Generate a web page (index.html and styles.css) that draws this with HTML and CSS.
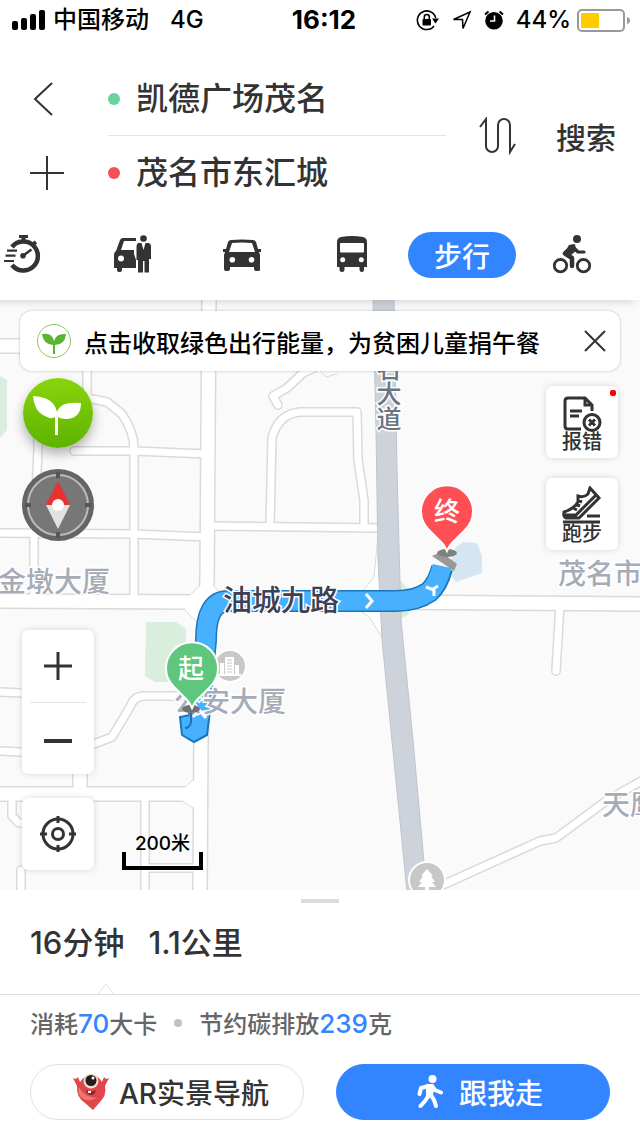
FILE: index.html
```html
<!DOCTYPE html>
<html lang="zh-CN">
<head>
    <meta charset="UTF-8">
    <meta name="viewport" content="width=device-width, initial-scale=1.0">
    <title>步行路线</title>
    <link rel="stylesheet" href="styles.css">
</head>
<body>
    <div class="status-bar">
        <div class="status-left">
            <svg width="34" height="20" viewBox="0 0 34 20">
                <rect x="0" y="11" width="6" height="9" rx="2"/>
                <rect x="9" y="8" width="6" height="12" rx="2"/>
                <rect x="18" y="4" width="6" height="16" rx="2"/>
                <rect x="27" y="0" width="6" height="20" rx="2"/>
            </svg>
            <span>中国移动</span>
            <span class="network">4G</span>
        </div>
        <div class="status-time">16:12</div>
        <div class="status-right">
            <svg width="24" height="22" viewBox="0 0 24 22">
                <path d="M18 17A9.300 9.300 0 1 1 19.700 9" fill="none" stroke="#000" stroke-width="1.600"/>
                <path d="M16 9.500h7l-3.500 5z"/>
                <rect x="6.500" y="10" width="8.500" height="6.500" rx="1"/>
                <path d="M8.300 10.500V8a2.500 2.500 0 0 1 5 0v2.500" fill="none" stroke="#000" stroke-width="1.600"/>
            </svg>
            <svg width="20" height="20" viewBox="0 0 20 20">
                <path d="M1.500 9.500L18 2L11 18.500L10.500 9.500Z" fill="none" stroke="#000" stroke-width="1.500"/>
            </svg>
            <svg width="20" height="20" viewBox="0 0 20 20">
                <circle cx="10" cy="10.700" r="8.800"/>
                <path d="M1 4.500L4.500 1.500M19 4.500L15.500 1.500" stroke="#000" stroke-width="2"/>
                <path d="M10.500 5.500V11H6" fill="none" stroke="#fff" stroke-width="1.600"/>
            </svg>
            <span>44%</span>
            <svg width="53" height="23" viewBox="0 0 53 23">
                <rect x="1" y="1" width="46" height="21" rx="4" fill="#fff" stroke="#999" stroke-width="2"/>
                <rect x="4" y="4" width="18" height="15" rx="1" fill="#fc0"/>
                <path d="M50 8q3 1 3 3.500t-3 3.500z" fill="#999"/>
            </svg>
        </div>
    </div>

    <header class="search">
        <div class="search-side">
            <button class="icon-btn" aria-label="返回">
                <svg width="36" height="36" viewBox="0 0 36 36"><path d="M23 2L6 18L23 34"/></svg>
            </button>
            <button class="icon-btn" aria-label="添加途经点">
                <svg width="36" height="36" viewBox="0 0 36 36"><path d="M1 18H35M18 1V35"/></svg>
            </button>
        </div>
        <div class="search-fields">
            <label class="field">
                <span class="dot dot-start"></span>
                <input type="text" value="凯德广场茂名" aria-label="起点">
            </label>
            <label class="field">
                <span class="dot dot-end"></span>
                <input type="text" value="茂名市东汇城" aria-label="终点">
            </label>
        </div>
        <button class="icon-btn" aria-label="交换起终点">
            <svg width="38" height="38" viewBox="0 0 38 38"><path d="M1 10L7 2V29a6 6 0 0 0 12 0V8a6 6 0 0 1 12 0V35L36 27"/></svg>
        </button>
        <button class="search-btn">搜索</button>
    </header>

    <nav class="modes">
        <button class="mode" aria-label="智行">
            <svg width="40" height="40" viewBox="0 0 40 40">
                <path d="M10 12A14.500 14.500 0 1 1 10 30" fill="none" stroke="#333" stroke-width="4.500"/>
                <path d="M17 0h9v3h-2.500v4h-4V3H17z"/>
                <path d="M30 10L34 7" stroke="#333" stroke-width="4"/>
                <path d="M5 15.700H15M3.500 20.700H13.500M2 26H12" stroke="#333" stroke-width="2.200"/>
                <path d="M21 20.700L29.500 14.500" stroke="#333" stroke-width="2.500"/>
                <circle cx="21" cy="20.700" r="2.800"/>
            </svg>
        </button>
        <button class="mode" aria-label="打车">
            <svg width="40" height="40" viewBox="0 0 40 40">
                <path d="M4 16L8 5Q9 3 11 3H24V6H12L9 15H22V19L24 25V33H10V35Q10 37 8 37Q5 37 5 35V33H2V20Q2 17 4 16Z"/>
                <circle cx="9" cy="23.500" r="3" fill="#fff"/>
                <circle cx="31.500" cy="3.500" r="3.300"/>
                <path d="M27 8H36Q39 8 39 12V24H37V37.500H32.500V26H31V37.500H26V25H24.500V12Q24.500 8 27 8Z"/>
                <path d="M29.500 8L31.500 15L33.500 8Z" fill="#fff"/>
            </svg>
        </button>
        <button class="mode" aria-label="驾车">
            <svg width="40" height="40" viewBox="0 0 40 40">
                <path fill-rule="evenodd" d="M9 5Q20 4 31 5Q33 5 34 7L36 14H39V17H37L38 20V35Q38 36 36 36H34Q32 36 32 34V32H8V34Q8 36 6 36H4Q2 36 2 34V20L3 17H1V14H4L6 7Q7 5 9 5ZM10 8L7 17H33L30 8Q20 7 10 8Z"/>
                <circle cx="10.300" cy="24.700" r="2.800" fill="#fff"/>
                <circle cx="29.500" cy="24.700" r="2.800" fill="#fff"/>
            </svg>
        </button>
        <button class="mode" aria-label="公交">
            <svg width="40" height="40" viewBox="0 0 40 40">
                <path d="M9 2Q20 0 31 2Q35 3 35 7V32H32V35Q32 37 30 37Q27.500 37 27.500 35V32H12.500V35Q12.500 37 10 37Q7.500 37 7.500 35V32H5V7Q5 3 9 2Z"/>
                <rect x="8" y="8" width="24" height="9.500" rx="1" fill="#fff"/>
                <circle cx="10.700" cy="24.700" r="2.500" fill="#fff"/>
                <circle cx="29.300" cy="24.700" r="2.500" fill="#fff"/>
            </svg>
        </button>
        <button class="mode mode-active">步行</button>
        <button class="mode" aria-label="骑行">
            <svg width="40" height="40" viewBox="0 0 40 40">
                <g fill="none" stroke="#333" stroke-linecap="round" stroke-linejoin="round">
                    <circle cx="8.500" cy="30.700" r="6.200" stroke-width="2.800"/>
                    <circle cx="31.500" cy="30.700" r="6.200" stroke-width="2.800"/>
                    <path d="M20 12L13 18.500L20 23V31" stroke-width="4.500"/>
                    <path d="M21 12L26 17H32" stroke-width="3.200"/>
                </g>
                <path d="M17 10L23 9L24 16L19 20L12 19Z"/>
                <circle cx="25" cy="4" r="4"/>
            </svg>
        </button>
    </nav>

    <main class="map">
        <svg class="map-canvas" viewBox="0 300 640 590" preserveAspectRatio="xMidYMid slice">
            <defs>
                <g id="lanes">
                    <path d="M87 346V398L107 402L122 414Q134 432 134 448V600"/>
                    <path d="M74 451H134L207 454"/>
                    <path d="M38 400V450L34 535V600"/>
                    <path d="M0 533L134 534L207 537"/>
                    <path d="M207 526L380 528"/>
                    <path d="M270 526L272 438Q278 414 300 412H357L358 460L364 500V528"/>
                    <path d="M278 405L273 396L287 388L303 373L314 368L320 356"/>
                    <path d="M560 604L556 671"/>
                    <path d="M425 893L540 841L556 838L606 801L645 779"/>
                    <path d="M0 692L22 693L60 706"/>
                    <path d="M0 751L40 753L94 744L112 737L130 707Q134 696 144 696H200"/>
                    <path d="M12 796V816L19 823H40"/>
                    <path d="M21 870V895"/>
                    <path d="M145 794V895"/>
                    <path d="M145 868H200"/>
                </g>
                <g id="streets">
                    <path d="M0 346H88"/>
                    <path d="M209 295L207 580L201 740L200 895"/>
                    <path d="M0 601L200 602H380L640 604"/>
                    <path d="M80 740V794"/>
                    <path d="M0 794H198"/>
                </g>
            </defs>

            <!-- parks and blocks -->
            <path class="park" d="M-5 376H0L7 380V430L0 438H-5ZM146 622H176L186 629V682H155L145 676Z"/>
            <path class="block" d="M455 548L463 542L477 543L482 556V573L456 582L447 570Z"/>

            <use href="#lanes" class="lane-edge"/>
            <use href="#streets" class="street-edge"/>
            <path class="corner" d="M378 535L374 577L362 592V612L370 618L381 636H390V535Z"/>
            <path class="corner" d="M190 595L199 586H214L222 596V608L212 622H197L184 609ZM184 788L193 780H207V808H193L182 801Z"/>
            <use href="#lanes" class="lane"/>
            <use href="#streets" class="street"/>
            <path class="park" d="M400 580L409 590V614L400 620Z"/>
            <path class="highway" d="M373 298H394L397 470L401 620L413 740L424 862L427 892H407L382 640L378 560L376 430Z"/>
            <path class="park-edge" d="M320 371L326 377L337 374"/>

            <!-- walking route -->
            <g class="route">
                <path class="route-edge" d="M199 715L206 640Q206 601 228 601H396Q416 601 429 592Q438 584 442 568"/>
                <path class="route-end" d="M180 717L182 735L194 742L207 735L210 711Z"/>
                <path class="route-fill" d="M199 718L206 640Q206 601 228 601H396Q416 601 429 592Q438 584 442 566"/>
                <path class="route-hook" d="M191 710V722Q190 728 185 728"/>
                <path class="route-arrow" d="M366 594L372 601L366 608M426 587L434 590V596M193 717L199 710L206 718M433 589L438 586"/>
            </g>

            <!-- road and place names -->
            <text class="road-name-side" x="387" y="356">名大道</text>
            <g class="place">
                <text x="-2" y="592">金墩大厦</text>
                <text x="558" y="584">茂名市</text>
                <text x="602" y="815">天鹰</text>
                <text x="174" y="712">公安大厦</text>
            </g>
            <text class="road-name" x="223" y="611">油城九路</text>

            <!-- points of interest -->
            <circle class="poi" cx="230" cy="666" r="16"/>
            <path fill="#fff" d="M225 657H234V674H225ZM220 663H224V674H220ZM235 665H239V674H235ZM218 674H241V676H218Z"/>
            <path stroke="#c8c8c8" stroke-width="1" d="M227 660H232M227 663H232M227 666H232M227 669H232M227 672H232"/>
            <circle class="poi" cx="427" cy="880" r="18"/>
            <path fill="#fff" d="M427 869L433 876H431L435 882H432L436 887H429V892H425V887H418L422 882H419L423 876H421Z"/>

            <!-- start and end pins -->
            <path d="M432 556L441 552L457 564L454 571Z" fill="#999"/>
            <ellipse cx="447" cy="553" rx="10" ry="4" fill="#808080"/>
            <ellipse cx="191" cy="709" rx="9" ry="4" fill="#707070"/>
            <path class="pin pin-end" d="M447 551Q444 544 438 539L429 530A26 26 0 1 1 465 530L456 539Q450 544 447 551Z"/>
            <path class="pin pin-start" d="M192 708Q189 701 183 696L174 687A26 26 0 1 1 210 687L201 696Q195 701 192 708Z"/>
            <text class="pin-text" x="447" y="521">终</text>
            <text class="pin-text" x="191" y="678">起</text>
        </svg>

        <div class="map-overlay">
            <div class="banner">
                <svg width="36" height="36" viewBox="0 0 36 36">
                    <circle cx="18" cy="18" r="16.500" fill="#fff" stroke="#8cc95c" stroke-width="1"/>
                    <path fill="#5cb531" d="M6 11Q16 9 18 18Q20 10 30 11Q29 22 19 22V31H17V22Q7 21 6 11Z"/>
                </svg>
                <span class="banner-text">点击收取绿色出行能量，为贫困儿童捐午餐</span>
                <button class="icon-btn" aria-label="关闭">
                    <svg width="22" height="22" viewBox="0 0 22 22"><path d="M1 1L21 21M21 1L1 21"/></svg>
                </button>
            </div>

            <div class="map-tools">
                <div class="tools-left">
                    <div class="tool-group">
                        <button class="energy" aria-label="绿色能量">
                            <svg width="70" height="70" viewBox="0 0 70 70">
                                <path fill="#fff" d="M10 18Q31 19 34 34Q37 23 58 25Q58 40 44 41Q38 41 35 39V57H32V39Q28 42 20 37Q11 32 10 18Z"/>
                            </svg>
                        </button>
                        <button class="compass" aria-label="指南针">
                            <svg width="72" height="72" viewBox="0 0 72 72">
                                <circle cx="36" cy="36" r="33" fill="#777" stroke="#656565" stroke-width="6"/>
                                <circle cx="36" cy="36" r="30" fill="none" stroke="#bbb" stroke-width="2"/>
                                <path d="M36 3V9M36 63V69M3 36H9M63 36H69" stroke="#555" stroke-width="4"/>
                                <path d="M36 12L48 36H24Z" fill="#e8322f"/>
                                <path d="M36 60L48 36H24Z" fill="#e2e2e2"/>
                                <circle cx="36" cy="36" r="6" fill="#fff"/>
                            </svg>
                        </button>
                    </div>
                    <div class="tool-group tool-group-bottom">
                        <div class="card zoom">
                            <button class="zoom-btn" aria-label="放大">
                                <svg width="28" height="28" viewBox="0 0 28 28"><path d="M0 14H28M14 0V28"/></svg>
                            </button>
                            <button class="zoom-btn" aria-label="缩小">
                                <svg width="28" height="28" viewBox="0 0 28 28"><path d="M0 16H28" stroke-width="4"/></svg>
                            </button>
                        </div>
                        <button class="card locate" aria-label="定位">
                            <svg width="36" height="36" viewBox="0 0 36 36">
                                <circle cx="18" cy="18" r="15"/>
                                <circle cx="18" cy="18" r="5.500"/>
                                <path d="M18 0V7M18 29V36M0 18H7M29 18H36"/>
                            </svg>
                        </button>
                    </div>
                </div>
                <div class="scale">
                    <span>200米</span>
                    <div class="scale-bar"></div>
                </div>
                <div class="tools-right">
                    <button class="card tool">
                        <svg width="40" height="36" viewBox="0 0 40 36">
                            <path d="M19 33H6Q3 33 3 30V5Q3 2 6 2H23L30 9V15M23 2V9H30M8 15H20M8 20H17"/>
                            <circle cx="30" cy="26.500" r="8"/>
                            <path d="M27 23.500L33 29.500M33 23.500L27 29.500"/>
                        </svg>
                        <span>报错</span>
                        <i class="badge"></i>
                    </button>
                    <button class="card tool">
                        <svg width="40" height="38" viewBox="0 0 40 38">
                            <path d="M28 2L37 12L17 32H4Q1 31 2 26Q12 23 16 16V10Q22 12 26 8ZM3 29H14L34 9M15 14L20 16M13 18L18 20M11 22L15 24M25 30H38M1 36H38"/>
                        </svg>
                        <span>跑步</span>
                    </button>
                </div>
            </div>
        </div>
    </main>

    <section class="panel">
        <div class="handle"></div>
        <div class="summary">
            <span>16分钟</span>
            <span>1.1公里</span>
        </div>
        <div class="details">
            <svg class="caret" width="16" height="12" viewBox="0 0 16 12"><path d="M0 11L8 1L16 11" fill="#fff" stroke="#ddd"/></svg>
            <span>消耗<b>70</b>大卡</span>
            <span class="sep"></span>
            <span>节约碳排放<b>239</b>克</span>
        </div>
        <div class="actions">
            <button class="btn">
                <svg width="36" height="38" viewBox="0 0 36 38">
                    <path fill="#e0474c" d="M0 5L3 6L5 4L7 9Q12 2 18 2Q25 2 29 9L31 4L33 6L36 5L32 13Q34 22 27 29L20 37L12 30Q3 24 4 13Z"/>
                    <path fill="#f07674" d="M6 14Q10 24 24 25Q14 30 8 24Q4 19 6 14Z"/>
                    <circle cx="18" cy="8" r="7.500" fill="#e9dfd0"/>
                    <circle cx="18" cy="7.500" r="5.500" fill="#241a1c"/>
                    <circle cx="20" cy="5" r="1.500" fill="#fff"/>
                    <path d="M13 17Q18 20 23 17Q22 22 18 22Q14 22 13 17Z" fill="#8b2328"/>
                    <path d="M15 18H18V20H15Z" fill="#fff"/>
                </svg>
                <span>AR实景导航</span>
            </button>
            <button class="btn btn-primary">
                <svg width="26" height="34" viewBox="0 0 26 34">
                    <circle cx="15.500" cy="4" r="4"/>
                    <path fill="none" stroke="#fff" stroke-linecap="round" stroke-linejoin="round" stroke-width="4" d="M12 11L4 13L2.500 19M15 11L18 15L24 17.500M12 20L8 26L3.500 31M14 20L17 25L19 31"/>
                    <path d="M9 9H16L18 13L15 22H9Z"/>
                </svg>
                <span>跟我走</span>
            </button>
        </div>
    </section>
</body>
</html>
```

FILE: styles.css
```css
* {
    box-sizing: border-box;
}
body {
    margin: 0;
    min-height: 100vh;
    display: flex;
    flex-direction: column;
    background: #fff;
    color: #333;
    font-family: Inter, "Noto Sans CJK SC", sans-serif;
    font-size: 24px;
    font-weight: 500;
}
button {
    padding: 0;
    border: none;
    background: none;
    color: inherit;
    font: inherit;
    cursor: pointer;
}
svg {
    display: block;
    flex: none;
}

/* status bar */
.status-bar {
    display: grid;
    grid-template-columns: 1fr auto 1fr;
    align-items: center;
    height: 40px;
    padding: 0 10px 0 12px;
    color: #000;
    line-height: 40px;
}
.status-left, .status-right {
    display: flex;
    align-items: center;
    gap: 7px;
}
.status-right {
    justify-content: flex-end;
    gap: 12px;
}
.status-right span {
    margin-right: -6px;
}
.network {
    margin-left: 14px;
}
.status-time {
    margin-left: 6px;
    font-size: 26px;
    font-weight: 700;
}

/* start / end search */
.search {
    display: flex;
    align-items: center;
    padding: 22px 24px 0 29px;
}
.search-side {
    width: 79px;
}
.icon-btn {
    display: flex;
    align-items: center;
}
.icon-btn svg {
    fill: none;
    stroke: #333;
    stroke-width: 2;
}
.search-side .icon-btn {
    height: 74px;
}
.search-fields {
    flex: 1;
    min-width: 0;
    margin-right: 33px;
}
.field {
    display: flex;
    align-items: center;
    height: 74px;
    gap: 16px;
}
.field:first-child {
    border-bottom: 1px solid #e4e4e4;
}
.field input {
    flex: 1;
    min-width: 0;
    padding: 0;
    border: none;
    outline: none;
    background: none;
    color: #333;
    font: inherit;
    font-size: 32px;
    line-height: 48px;
}
.dot {
    width: 12px;
    height: 12px;
    border-radius: 50%;
}
.dot-start {
    background: #67d49c;
}
.dot-end {
    background: #ef5250;
}
.search-btn {
    margin-left: 39px;
    font-size: 30px;
}

.modes {
    position: relative;
    z-index: 1;
    display: grid;
    grid-template-columns: repeat(6, 1fr);
    margin: 0 0 0 -33px;
    padding: 22px 13px 22px 0;
    background: #fff;
    box-shadow: 0 8px 8px -6px rgba(0, 0, 0, 0.15);
}
.mode {
    display: flex;
    align-items: center;
    justify-content: center;
    height: 46px;
    margin: 0 1px;
    border-radius: 23px;
    font-size: 28px;
}
.mode svg {
    fill: #333;
}
.mode-active {
    background: #3385ff;
    color: #fff;
}

/* map */
.map {
    position: relative;
    flex: 1;
    min-height: 590px;
    overflow: hidden;
    background: #fafafa;
}
.map-canvas {
    position: absolute;
    inset: 0;
    width: 100%;
    height: 100%;
}
.lane, .lane-edge, .street, .street-edge {
    fill: none;
    stroke: #fff;
    stroke-width: 7px;
    stroke-linecap: round;
    stroke-linejoin: round;
}
.lane-edge {
    stroke: #dadada;
    stroke-width: 10px;
}
.street {
    stroke-width: 13px;
}
.street-edge {
    stroke: #dadada;
    stroke-width: 16px;
}
.corner {
    fill: #fff;
    stroke: #dadada;
}
.park {
    fill: #d9eedd;
}
.park-edge {
    fill: none;
    stroke: #dadada;
}
.block {
    fill: #d5e5f2;
}
.highway {
    fill: #ced3db;
    stroke: #bfc5cd;
}
.route path {
    fill: none;
}
.route .route-edge {
    stroke: #1776bd;
    stroke-width: 22px;
}
.route .route-fill {
    stroke: #48b1ff;
    stroke-width: 19px;
}
.route .route-end {
    fill: #48b1ff;
    stroke: #1776bd;
    stroke-width: 2px;
}
.route .route-hook {
    stroke: #1776bd;
    stroke-width: 2px;
}
.route .route-arrow {
    stroke: #fff;
    stroke-width: 3px;
}
.place, .road-name, .road-name-side {
    fill: #a6acb7;
    stroke: #fff;
    stroke-width: 3px;
    paint-order: stroke;
    font-size: 28px;
}
.road-name {
    fill: #3b4154;
    font-size: 29px;
}
.road-name-side {
    fill: #6c7482;
    font-size: 25px;
    writing-mode: vertical-rl;
}
.poi {
    fill: #c8c8c8;
    stroke: #fff;
    stroke-width: 2px;
}
.pin {
    stroke: #fff;
    stroke-width: 2px;
}
.pin-start {
    fill: #5fc77d;
}
.pin-end {
    fill: #ff4f55;
}
.pin-text {
    fill: #fff;
    font-size: 26px;
    text-anchor: middle;
}

/* controls over the map */
.map-overlay {
    position: absolute;
    inset: 0;
    display: flex;
    flex-direction: column;
    padding: 11px 20px 20px;
}
.banner {
    display: flex;
    align-items: center;
    height: 60px;
    padding: 0 14px 0 16px;
    border-radius: 12px;
    background: #fff;
    box-shadow: 0 0 3px rgba(0, 0, 0, 0.25);
    color: #000;
}
.banner-text {
    flex: 1;
    margin-left: 12px;
    white-space: nowrap;
}
.map-tools {
    flex: 1;
    display: flex;
    padding: 7px 2px 0;
}
.tools-left {
    display: flex;
    flex-direction: column;
    justify-content: space-between;
    width: 72px;
}
.tool-group {
    display: flex;
    flex-direction: column;
    align-items: center;
    gap: 21px;
}
.tool-group-bottom {
    align-items: stretch;
    gap: 24px;
}
.energy, .compass {
    border-radius: 50%;
}
.energy {
    background: linear-gradient(#8ad40c, #5cb300);
    box-shadow: 0 6px 12px rgba(0, 0, 0, 0.3);
}
.card {
    border-radius: 6px;
    background: #fff;
    box-shadow: 0 0 6px rgba(0, 0, 0, 0.15);
}
.zoom {
    padding: 0 8px;
}
.zoom-btn {
    display: flex;
    align-items: center;
    justify-content: center;
    width: 100%;
    height: 72px;
}
.zoom-btn + .zoom-btn {
    border-top: 1px solid #e2e2e2;
}
.zoom-btn svg, .locate svg, .tool svg {
    fill: none;
    stroke: #333;
    stroke-width: 3px;
}
.locate {
    display: flex;
    align-items: center;
    justify-content: center;
    height: 72px;
}
.scale {
    align-self: flex-end;
    width: 81px;
    margin-left: 28px;
    color: #000;
    font-size: 19px;
    line-height: 16px;
    text-align: center;
}
.scale-bar {
    height: 18px;
    border: 4px solid #000;
    border-top: none;
}
.tools-right {
    display: flex;
    flex-direction: column;
    gap: 20px;
    margin-left: auto;
    padding-top: 8px;
}
.tool {
    position: relative;
    display: flex;
    flex-direction: column;
    align-items: center;
    justify-content: flex-end;
    width: 72px;
    height: 72px;
    padding-bottom: 6px;
    font-size: 20px;
    line-height: 20px;
}
.badge {
    position: absolute;
    top: 4px;
    right: 2px;
    width: 6px;
    height: 6px;
    border-radius: 2px;
    background: #f00;
}

/* bottom panel */
.panel {
    position: relative;
    background: #fff;
}
.handle {
    width: 38px;
    height: 4px;
    margin: 9px auto 0;
    background: #dcdcdc;
}
.summary {
    display: flex;
    gap: 24px;
    height: 91px;
    padding: 0 30px;
    font-size: 31px;
    line-height: 80px;
}
.details {
    position: relative;
    display: flex;
    align-items: center;
    gap: 17px;
    height: 56px;
    padding: 0 30px;
    border-top: 1px solid #ddd;
    color: #666;
}
.details b {
    color: #3385ff;
    font-size: 26px;
    font-weight: 500;
}
.caret {
    position: absolute;
    top: -12px;
    left: 98px;
}
.sep {
    width: 8px;
    height: 8px;
    border-radius: 50%;
    background: #c0c0c0;
}
.actions {
    display: grid;
    grid-template-columns: 1fr 1fr;
    gap: 32px;
    padding: 14px 30px 16px;
}
.btn {
    display: flex;
    align-items: center;
    justify-content: center;
    gap: 10px;
    height: 56px;
    padding-left: 8px;
    border: 1px solid #e0e0e0;
    border-radius: 28px;
    font-size: 28px;
}
.btn-primary {
    gap: 16px;
    padding-left: 14px;
    border-color: #3385ff;
    background: #3385ff;
    color: #fff;
}
.btn-primary svg {
    fill: #fff;
}
```
